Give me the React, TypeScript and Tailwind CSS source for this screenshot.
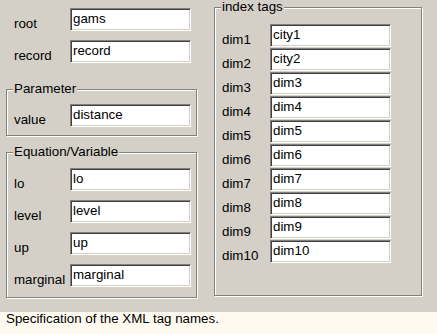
const font = { fontFamily: '"Liberation Sans", Arial, sans-serif' };

function Field({ label, value, labelWidth }: { label: string; value: string; labelWidth: string }) {
  return (
    <div className="flex items-start h-[23px]">
      <div className={`${labelWidth} pt-[9px] leading-[14px] whitespace-nowrap`}>{label}</div>
      <div className="w-[121px] h-[23px] bg-white border border-t-[#808080] border-l-[#808080] border-b-white border-r-white shadow-[inset_1px_1px_0_#404040,inset_-1px_-1px_0_#d4d0c8] pl-[2px] pt-[2px] leading-[15px] whitespace-nowrap overflow-hidden">
        {value}
      </div>
    </div>
  );
}

function GroupBox({
  title,
  className,
  children,
}: {
  title: string;
  className: string;
  children: React.ReactNode;
}) {
  return (
    <div
      className={`relative border border-[#808080] shadow-[inset_1px_1px_0_#fff,1px_1px_0_#fff] ${className}`}
    >
      <span className="absolute top-[-9px] left-[6px] px-[1px] bg-[#d4d0c8] leading-[15px] whitespace-nowrap">
        {title}
      </span>
      {children}
    </div>
  );
}

const dims = [
  ["dim1", "city1"],
  ["dim2", "city2"],
  ["dim3", "dim3"],
  ["dim4", "dim4"],
  ["dim5", "dim5"],
  ["dim6", "dim6"],
  ["dim7", "dim7"],
  ["dim8", "dim8"],
  ["dim9", "dim9"],
  ["dim10", "dim10"],
];

export default function App() {
  return (
    <div
      className="w-[437px] h-[334px] bg-[#d4d0c8] text-black text-[13.33px] flex flex-col overflow-hidden"
      style={font}
    >
      <div className="h-[312px] flex pl-[6px]">
        {/* left column */}
        <div className="w-[191px] flex flex-col">
          <div className="mt-[8px] pl-[8px] flex flex-col gap-[9px]">
            <Field label="root" value="gams" labelWidth="w-[56px]" />
            <Field label="record" value="record" labelWidth="w-[56px]" />
          </div>

          <GroupBox title="Parameter" className="mt-[26px] h-[47px] pl-[7px] pt-[14px]">
            <Field label="value" value="distance" labelWidth="w-[56px]" />
          </GroupBox>

          <GroupBox title="Equation/Variable" className="mt-[16px] h-[146px] pl-[7px] pt-[15px]">
            <div className="flex flex-col gap-[9px]">
              <Field label="lo" value="lo" labelWidth="w-[56px]" />
              <Field label="level" value="level" labelWidth="w-[56px]" />
              <Field label="up" value="up" labelWidth="w-[56px]" />
              <Field label="marginal" value="marginal" labelWidth="w-[56px]" />
            </div>
          </GroupBox>
        </div>

        {/* index tags */}
        <GroupBox title="index tags" className="ml-[17px] mt-[7px] w-[208px] h-[289px] pl-[7px] pt-[16px]">
          <div className="flex flex-col gap-[1px]">
            {dims.map(([l, v]) => (
              <Field key={l} label={l} value={v} labelWidth="w-[48px]" />
            ))}
          </div>
        </GroupBox>
      </div>

      <div className="h-[22px] bg-[#fffaef] pl-[6px] leading-[13px] whitespace-nowrap">
        Specification of the XML tag names.
      </div>
    </div>
  );
}
